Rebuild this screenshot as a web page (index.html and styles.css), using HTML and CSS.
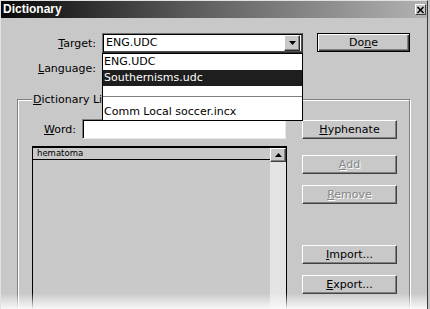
FILE: index.html
```html
<!DOCTYPE html>
<html>
<head>
<meta charset="utf-8">
<link rel="stylesheet" href="styles.css">
</head>
<body>
<div class="dialog">
  <div class="titlebar">
    <span class="title">Dictionary</span>
    <span class="close"><svg width="9" height="8" viewBox="0 0 9 8"><path d="M1.5 1 L7.5 7 M7.5 1 L1.5 7" stroke="#000" stroke-width="1.5" fill="none"/></svg></span>
  </div>
  <div class="top">
    <label class="lbl"><u>T</u>arget:</label>
    <div class="combo">
      <div class="combo-box">
        <span class="combo-text">ENG.UDC</span>
        <span class="drop-btn"><svg width="7" height="4" viewBox="0 0 7 4"><path d="M0 0 H7 L3.5 4 Z" fill="#000"/></svg></span>
      </div>
      <div class="combo-list">
        <div class="item">ENG.UDC</div>
        <div class="item selected">Southernisms.udc</div>
        <div class="item blank"></div>
        <div class="sep"></div>
        <div class="item last">Comm Local soccer.incx</div>
      </div>
    </div>
    <button class="btn btn-default">Do<u>n</u>e</button>
    <label class="lbl"><u>L</u>anguage:</label>
  </div>
  <fieldset class="group">
    <legend class="legend"><u>D</u>ictionary List</legend>
    <div class="group-grid">
      <div class="left">
        <div class="word-row">
          <label class="lbl word-lbl"><u>W</u>ord:</label>
          <div class="input"></div>
        </div>
        <div class="listbox">
          <div class="list-area">
            <div class="list-head">hematoma</div>
          </div>
          <div class="scrollbar">
            <div class="scroll-up"><svg width="7" height="4" viewBox="0 0 7 4"><path d="M0 4 H7 L3.5 0 Z" fill="#000"/></svg></div>
          </div>
        </div>
      </div>
      <div class="buttons">
        <button class="btn b-hyph"><u>H</u>yphenate</button>
        <button class="btn disabled b-add"><u>A</u>dd</button>
        <button class="btn disabled b-remove"><u>R</u>emove</button>
        <button class="btn b-import"><u>I</u>mport...</button>
        <button class="btn b-export"><u>E</u>xport...</button>
      </div>
    </div>
  </fieldset>
</div>
</body>
</html>
```
FILE: styles.css
```css
html, body {
  margin: 0;
  padding: 0;
}
body {
  background: #c4c4c4;
  font-family: "DejaVu Sans", sans-serif;
  font-size: 11px;
  color: #000;
}
.dialog {
  width: 428px;
  height: 309px;
  box-sizing: border-box;
  border-top: 1px solid #e2e2e2;
  border-left: 1px solid #e2e2e2;
  border-right: 1px solid #3a3a3a;
  background: #c8c8c8;
  position: relative;
  overflow: hidden;
}
.dialog::after {
  content: "";
  position: absolute;
  left: 0;
  right: 0;
  bottom: 0;
  height: 16px;
  background: linear-gradient(rgba(255,255,255,0), rgba(250,250,250,0.97));
  pointer-events: none;
}
.titlebar {
  height: 17px;
  display: flex;
  align-items: center;
  justify-content: space-between;
  padding: 0 1px 0 2px;
  background: linear-gradient(to right, #080808, #5c5c5c 45%, #b2b2b2);
  color: #fff;
}
.title {
  font-family: "Liberation Sans", sans-serif;
  font-weight: bold;
  font-size: 12px;
  line-height: 17px;
}
.close {
  width: 11px;
  height: 11px;
  box-sizing: border-box;
  background: #c8c8c8;
  border: 1px solid;
  border-color: #fff #404040 #404040 #fff;
  display: flex;
  align-items: center;
  justify-content: center;
}
.top {
  display: grid;
  grid-template-columns: 95px 201px 101px;
  grid-template-rows: 20px 20px;
  column-gap: 6px;
  row-gap: 5px;
  padding-top: 15px;
}
.lbl {
  text-align: right;
  align-self: center;
  line-height: 13px;
}
.combo {
  position: relative;
}
.combo-box {
  height: 20px;
  box-sizing: border-box;
  background: #fff;
  border: 1px solid;
  border-color: #707070 #303030 #303030 #707070;
  box-shadow: inset 1px 1px 0 #000, inset -1px -1px 0 #505050;
  display: flex;
  align-items: center;
  padding: 0 2px 0 3px;
}
.combo-text {
  flex: 1;
  line-height: 14px;
}
.drop-btn {
  width: 16px;
  height: 16px;
  box-sizing: border-box;
  background: #c8c8c8;
  border: 1px solid;
  border-color: #fff #303030 #303030 #fff;
  box-shadow: inset -1px -1px 0 #808080;
  display: flex;
  align-items: center;
  justify-content: center;
}
.combo-list {
  position: absolute;
  top: 100%;
  left: 0;
  width: 201px;
  box-sizing: border-box;
  background: #fff;
  border: 1px solid #000;
  z-index: 10;
}
.item {
  height: 16px;
  line-height: 16px;
  padding-left: 1px;
  white-space: nowrap;
}
.item.selected {
  background: #1e1e1e;
  color: #fff;
}
.item.blank {
  height: 10px;
}
.sep {
  height: 1px;
  background: #808080;
  margin-bottom: 7px;
}
.btn {
  font-family: "DejaVu Sans", sans-serif;
  font-size: 11px;
  font-weight: normal;
  color: #000;
  height: 19px;
  width: 95px;
  padding: 0;
  box-sizing: border-box;
  background: #c8c8c8;
  border: 1px solid;
  border-color: #fff #404040 #404040 #fff;
  box-shadow: inset -1px -1px 0 #808080;
  line-height: 15px;
}
.btn-default {
  width: 93px;
  justify-self: end;
  align-self: start;
  border: 1px solid #000;
  box-shadow: inset 1px 1px 0 #fff, inset -1px -1px 0 #404040, inset -2px -2px 0 #808080;
}
.btn.disabled {
  color: #868686;
  text-shadow: 1px 1px 0 #fff;
}
.group {
  margin: 15px 0 0 16px;
  width: 393px;
  box-sizing: border-box;
  border: 1px solid #808080;
  box-shadow: 1px 1px 0 #fff, inset 1px 1px 0 #fff;
  padding: 13px 12px 0 14px;
  min-width: 0;
}
.legend {
  padding: 0 1px;
  line-height: 13px;
  background: #c8c8c8;
}
.group-grid {
  display: grid;
  grid-template-columns: 255px 95px;
  column-gap: 15px;
}
.word-row {
  display: flex;
  align-items: center;
  column-gap: 6px;
  height: 20px;
}
.word-lbl {
  width: 44px;
}
.input {
  width: 204px;
  height: 20px;
  box-sizing: border-box;
  background: #fff;
  border: 1px solid;
  border-color: #808080 #e8e8e8 #e8e8e8 #808080;
  box-shadow: inset 1px 1px 0 #000;
}
.listbox {
  margin-top: 7px;
  height: 200px;
  box-sizing: border-box;
  border: 1px solid #000;
  border-top-width: 2px;
  background: #c9c9c9;
  display: flex;
}
.list-area {
  flex: 1;
}
.list-head {
  height: 11px;
  line-height: 11px;
  border-bottom: 1px solid #000;
  padding-left: 4px;
  font-size: 8.5px;
}
.scrollbar {
  width: 16px;
  background: #e4e4e4;
}
.scroll-up {
  height: 14px;
  box-sizing: border-box;
  background: #c8c8c8;
  border: 1px solid;
  border-color: #fff #404040 #404040 #fff;
  box-shadow: inset -1px -1px 0 #808080;
  display: flex;
  align-items: center;
  justify-content: center;
}
.buttons {
  display: flex;
  flex-direction: column;
}
.b-hyph { margin-top: 1px; }
.b-add { margin-top: 16px; }
.b-remove { margin-top: 11px; }
.b-import { margin-top: 41px; }
.b-export { margin-top: 11px; }
```
